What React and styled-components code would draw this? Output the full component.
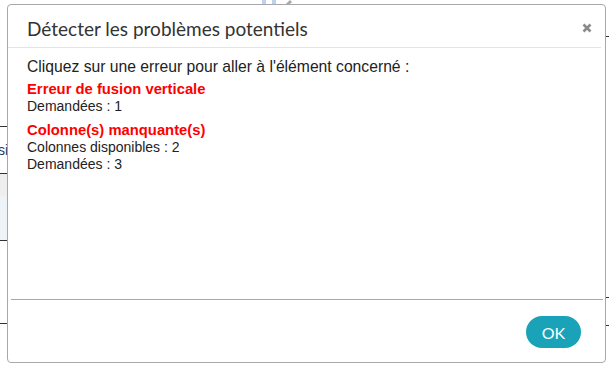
import React from "react";
import styled, { createGlobalStyle } from "styled-components";

const Global = createGlobalStyle`
  html, body { margin: 0; padding: 0; background: #fff; }
  body { width: 609px; height: 365px; overflow: hidden; font-family: "Liberation Sans", Arial, sans-serif; }
`;

const Page = styled.div`
  position: relative;
  width: 609px;
  height: 365px;
  overflow: hidden;
  background: #fff;
`;

const TopBits = styled.div`
  display: flex;
  align-items: flex-start;
  gap: 6px;
  padding-left: 262px;
  height: 8px;
`;

const Bar = styled.span`
  width: 4px;
  height: 7px;
  background: #bcd3ea;
`;

const Table = styled.div`
  display: flex;
  flex-direction: column;
  padding-top: 28px;
  width: 120px;
`;

const Row = styled.div`
  height: ${(p) => p.h}px;
  border-bottom: ${(p) => (p.line ? "1px solid #333" : "none")};
  background: ${(p) => p.bg || "transparent"};
  display: flex;
  align-items: center;
  font-size: 14px;
  color: #1f3a5c;
  text-indent: -2px;
`;

const Modal = styled.div`
  position: absolute;
  left: 7px;
  top: 4px;
  width: 597px;
  height: 357px;
  border: 1px solid #a8a8a8;
  border-radius: 4px;
  background: #fff;
  display: flex;
  flex-direction: column;
  box-sizing: content-box;
`;

const Header = styled.div`
  height: 42px;
  margin-right: 4px;
  border-bottom: 1px solid #e2e6ea;
  display: flex;
  align-items: center;
  justify-content: space-between;
  padding: 0 8px 0 19px;
`;

const Title = styled.h4`
  margin: 0;
  font-family: Lato, "Open Sans", sans-serif;
  font-weight: 400;
  font-size: 19px;
  color: #333;
  padding-top: 4px;
`;

const Close = styled.button`
  border: 0;
  background: none;
  padding: 0;
  width: 12px;
  height: 12px;
  display: flex;
  align-items: center;
  justify-content: center;
  margin-top: 4px;
  cursor: pointer;
`;

const Body = styled.div`
  flex: 1;
  padding: 10px 19px 0;
  font-family: "Liberation Sans", Arial, sans-serif;
  font-size: 14px;
  line-height: 17px;
  color: #222;
`;

const Intro = styled.p`
  margin: 0 0 6px;
  font-size: 15.7px;
`;

const Group = styled.div`
  margin-bottom: 7px;
  cursor: pointer;
`;

const ErrTitle = styled.div`
  color: #ff0000;
  font-weight: 700;
  font-size: 14.8px;
`;

const Footer = styled.div`
  margin: 0 2px 0 3px;
  border-top: 1px solid #a9a9a9;
  height: 62px;
  display: flex;
  align-items: center;
  justify-content: flex-end;
  padding-right: 22px;
`;

const OkButton = styled.button`
  border: 0;
  border-radius: 16px;
  background: #1aa3b8;
  color: #fff;
  font-family: Lato, "Open Sans", sans-serif;
  font-size: 16px;
  width: 55px;
  height: 32px;
  margin-top: 2px;
  cursor: pointer;
`;

const RightMarks = styled.div`
  position: absolute;
  right: 0;
  top: 0;
  width: 4px;
  height: 365px;
  display: flex;
  flex-direction: column;
`;

const Mark = styled.div`
  height: ${(p) => p.h}px;
  border-bottom: 1px solid ${(p) => p.c || "#333"};
`;

export default function App() {
  return (
    <Page>
      <Global />
      <TopBits>
        <Bar />
        <Bar />
        <svg width="12" height="8" viewBox="0 0 12 8">
          <path d="M2 8 L9 1" stroke="#aaa" strokeWidth="3" />
        </svg>
      </TopBits>
      <Table>
        <Row h={90} line />
        <Row h={46} line>si</Row>
        <Row h={22} bg="#eeeeee" />
        <Row h={44} bg="#eef3f8" line />
        <Row h={82} line />
      </Table>
      <RightMarks>
        <Mark h={36} />
        <Mark h={260} />
        <Mark h={27} />
      </RightMarks>
      <Modal>
        <Header>
          <Title>Détecter les problèmes potentiels</Title>
          <Close aria-label="Fermer">
            <svg width="10" height="10" viewBox="0 0 10 10">
              <path d="M1.5 1.5 L8.5 8.5 M8.5 1.5 L1.5 8.5" stroke="#8a8a8a" strokeWidth="2.6" />
            </svg>
          </Close>
        </Header>
        <Body>
          <Intro>Cliquez sur une erreur pour aller à l'élément concerné :</Intro>
          <Group>
            <ErrTitle>Erreur de fusion verticale</ErrTitle>
            <div>Demandées : 1</div>
          </Group>
          <Group>
            <ErrTitle>Colonne(s) manquante(s)</ErrTitle>
            <div>Colonnes disponibles : 2</div>
            <div>Demandées : 3</div>
          </Group>
        </Body>
        <Footer>
          <OkButton>OK</OkButton>
        </Footer>
      </Modal>
    </Page>
  );
}
